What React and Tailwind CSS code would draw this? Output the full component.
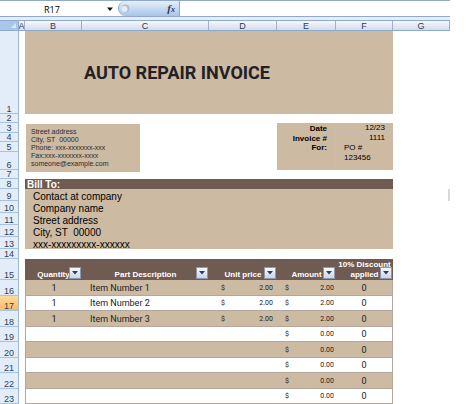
import React, { useState } from 'react';
import { clsx } from 'clsx';

const columns = ['A', 'B', 'C', 'D', 'E', 'F', 'G'];

const rowHeads = [
  { n: 1, h: 'h-[83px]' },
  { n: 2, h: 'h-[9px]' },
  { n: 3, h: 'h-[10px]' },
  { n: 4, h: 'h-[9px]' },
  { n: 5, h: 'h-[10px]' },
  { n: 6, h: 'h-[18px]' },
  { n: 7, h: 'h-[9px]' },
  { n: 8, h: 'h-[10px]' },
  { n: 9, h: 'h-[12px]' },
  { n: 10, h: 'h-[12px]' },
  { n: 11, h: 'h-[12px]' },
  { n: 12, h: 'h-[12px]' },
  { n: 13, h: 'h-[12px]' },
  { n: 14, h: 'h-[10px]' },
  { n: 15, h: 'h-[21px]' },
  { n: 16, h: 'h-[16px]' },
  { n: 17, h: 'h-[15px]' },
  { n: 18, h: 'h-[16px]' },
  { n: 19, h: 'h-[15px]' },
  { n: 20, h: 'h-[16px]' },
  { n: 21, h: 'h-[15px]' },
  { n: 22, h: 'h-[16px]' },
  { n: 23, h: 'h-[15px]' },
];

const items = [
  { qty: '1', name: 'Item Number 1', price: '2.00', amount: '2.00', discount: '0' },
  { qty: '1', name: 'Item Number 2', price: '2.00', amount: '2.00', discount: '0' },
  { qty: '1', name: 'Item Number 3', price: '2.00', amount: '2.00', discount: '0' },
  { amount: '0.00', discount: '0' },
  { amount: '0.00', discount: '0' },
  { amount: '0.00', discount: '0' },
  { amount: '0.00', discount: '0' },
  { amount: '0.00', discount: '0' },
];

const billTo = ['Contact at company', 'Company name', 'Street address', 'City, ST  00000', 'xxx-xxxxxxxxx-xxxxxx'];

function FormulaBar() {
  const [cell, setCell] = useState('R17');
  const [formula, setFormula] = useState('');

  return (
    <div className="flex h-[17px] border-t border-b border-[#8fa9c9] bg-white">
      <div className="flex w-[118px] shrink-0 items-center">
        <input
          aria-label="Name box"
          value={cell}
          onChange={(e) => setCell(e.target.value)}
          className="w-[104px] bg-transparent pt-0.5 text-center font-['Open_Sans',sans-serif] text-[9px] leading-[14px] text-black outline-none"
        />
        <button aria-label="Open name list" className="flex h-[14px] w-3 items-center justify-center">
          <svg width="6" height="4" viewBox="0 0 6 4" fill="#111"><path d="M0 0.5h6L3 4z" /></svg>
        </button>
      </div>
      <div className="flex w-[62px] shrink-0 items-center justify-between rounded-l-full border-l border-r border-[#8fa9c9] bg-linear-to-b from-[#e6effa] to-[#a8c5ea] pr-1 pl-0.5">
        <svg width="9" height="9" viewBox="0 0 9 9">
          <circle cx="4.5" cy="4.5" r="4" fill="#b3bfd0" />
          <circle cx="3.5" cy="5" r="3" fill="#e6edf6" />
        </svg>
        <button aria-label="Insert function" className="font-['Liberation_Serif',serif] text-[11px] leading-[14px] font-bold text-[#333b52] italic">
          f<span className="text-[8px]">x</span>
        </button>
      </div>
      <input
        aria-label="Formula"
        value={formula}
        onChange={(e) => setFormula(e.target.value)}
        className="min-w-0 flex-1 bg-white text-[10px] outline-none"
      />
    </div>
  );
}

function ColumnHeads() {
  return (
    <div className="grid h-[11px] grid-cols-[19px_6px_57px_127px_68px_59px_57px_1fr] border-t border-b border-[#8fa9c9] bg-linear-to-b from-[#f6f9fd] to-[#d2dceb] text-center text-[9px] leading-[10px] text-[#2c3a50]">
      <div className="flex items-end justify-end border-r border-[#8fa9c9] bg-[#a9c6ec] p-0.5">
        <svg width="5" height="5" viewBox="0 0 5 5" fill="#dbe8f8"><path d="M5 0v5H0z" /></svg>
      </div>
      {columns.map((c) => (
        <div key={c} className="flex justify-center overflow-hidden border-r border-[#9eb0ca]">{c}</div>
      ))}
    </div>
  );
}

function RowHeads() {
  return (
    <div className="w-[19px] shrink-0 border-r border-[#9db8da] bg-[#e3edf9] text-center text-[9px] leading-[8px] text-[#2c3f5c]">
      {rowHeads.map(({ n, h }) => (
        <div
          key={n}
          className={clsx(
            'flex items-end justify-center border-b border-[#a9c0de]',
            h,
            n === 17 && 'bg-linear-to-b from-[#fbdb9f] to-[#fbbd62]'
          )}
        >
          {n}
        </div>
      ))}
    </div>
  );
}

function HeadCell({ label, width }) {
  return (
    <th className={clsx('relative h-[21px] p-0 align-bottom', width)}>
      {label}
      <button
        aria-label={`Filter ${label}`}
        className="absolute right-px bottom-px flex size-3 items-center justify-center border border-[#8e98ab] bg-linear-to-b from-[#f7f9fc] to-[#cbd5e5]"
      >
        <svg width="6" height="4" viewBox="0 0 6 4" fill="#2b3f66"><path d="M0 0h6L3 3.5z" /></svg>
      </button>
    </th>
  );
}

function Money({ value }) {
  if (!value) return null;
  return (
    <div className="flex justify-between text-[7px]">
      <span>$</span>
      <span>{value}</span>
    </div>
  );
}

function ItemsTable() {
  return (
    <table className="w-full table-fixed border-separate border-spacing-0 text-[#222]">
      <thead className="bg-[#705b53] text-[8px] leading-[10px] font-bold text-white">
        <tr>
          <HeadCell label="Quantity" width="w-[57px]" />
          <HeadCell label="Part Description" width="w-[127px]" />
          <HeadCell label="Unit price" width="w-[68px]" />
          <HeadCell label="Amount" width="w-[59px]" />
          <HeadCell label="10% Discount applied" width="w-[57px]" />
        </tr>
      </thead>
      <tbody className="font-[Roboto,sans-serif] text-[9px] leading-[14px]">
        {items.map((item, i) => (
          <tr key={i} className={i % 2 === 0 ? 'h-[16px] bg-[#cdbaa2]' : 'h-[15px]'}>
            <td className="border-b border-l border-[#b3a69c] p-0 text-center">{item.qty}</td>
            <td className="border-b border-[#b3a69c] p-0 pl-2">{item.name}</td>
            <td className="border-b border-[#b3a69c] p-0 pr-1 pl-3"><Money value={item.price} /></td>
            <td className="border-b border-[#b3a69c] p-0 pr-0.5 pl-2"><Money value={item.amount} /></td>
            <td className="border-r border-b border-[#b3a69c] p-0 text-center">{item.discount}</td>
          </tr>
        ))}
      </tbody>
    </table>
  );
}

export default function App() {
  return (
    <div className="min-h-screen bg-white pr-6 font-['Liberation_Sans',Arial,sans-serif]">
      <FormulaBar />
      <div className="h-[3px] bg-[#e4edf9]"></div>
      <ColumnHeads />

      <div className="flex">
        <RowHeads />

        <main className="ml-1.5 w-[368px] shrink-0">
          <div className="flex h-[83px] items-center justify-center bg-[#cdbaa2] pr-16">
            <h1 className="font-[Roboto,sans-serif] text-[18px] leading-6 font-bold text-[#222126]">AUTO REPAIR INVOICE</h1>
          </div>

          {/* Shop address and invoice number */}
          <div className="flex h-[65px] items-start justify-between pt-[9px]">
            <address className="mt-px ml-px flex h-12 w-[114px] flex-col justify-center bg-[#cdbaa2] pl-[5px] text-[7px] leading-[8px] whitespace-pre text-[#2a2a2a] not-italic">
              <span>Street address</span>
              <span>City, ST  00000</span>
              <span>Phone: xxx-xxxxxxx-xxx</span>
              <span>Fax:xxx-xxxxxxx-xxxx</span>
              <span>someone@example.com</span>
            </address>

            <dl className="grid h-[47px] w-[116px] grid-cols-[58px_1fr] grid-rows-[10px_9px_1fr] bg-[#cdbaa2] text-[8px] leading-[10px] text-black">
              <dt className="pt-px pr-2 text-right font-bold">Date</dt>
              <dd className="border-b border-l border-[#c8bdb3] pr-2 text-right">12/23</dd>
              <dt className="pt-px pr-2 text-right font-bold">Invoice #</dt>
              <dd className="border-b border-l border-[#c8bdb3] pr-2 text-right">1111</dd>
              <dt className="pt-px pr-2 text-right font-bold">For:</dt>
              <dd className="border-l border-[#c8bdb3] pt-px pl-2">PO #<br />123456</dd>
            </dl>
          </div>

          {/* Customer */}
          <section className="bg-[#cdbaa2]">
            <h2 className="h-[10px] bg-[#705b53] pl-0.5 text-[10px] leading-[12px] font-bold text-white">Bill To:</h2>
            <div className="h-[60px] pt-0.5 pl-2 text-[10px] leading-[12px] whitespace-pre text-black">
              {billTo.map((line) => (
                <p key={line}>{line}</p>
              ))}
            </div>
          </section>

          <div className="pt-[10px]">
            <ItemsTable />
          </div>
        </main>

        <div className="flex flex-1 justify-end pt-[158px]">
          <div className="h-3 w-0.5 bg-[#d9d9d9]"></div>
        </div>
      </div>
    </div>
  );
}
